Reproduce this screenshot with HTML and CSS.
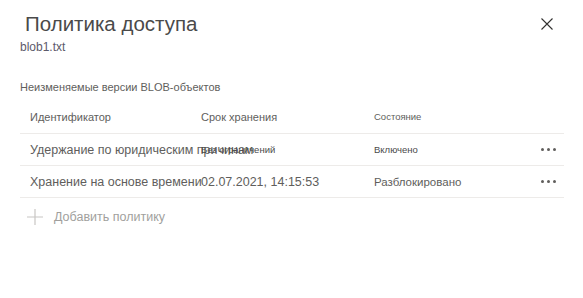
FILE: index.html
```html
<!DOCTYPE html>
<html lang="ru">
<head>
<meta charset="utf-8">
<link rel="stylesheet" href="styles.css">
</head>
<body>
<div class="panel">
  <div class="header">
    <div class="titles">
      <h1 class="title">Политика доступа</h1>
      <div class="subtitle">blob1.txt</div>
    </div>
    <button class="close" aria-label="Закрыть">
      <svg width="12" height="12" viewBox="0 0 12 12"><path d="M0.5 0.5 L11.5 11.5 M11.5 0.5 L0.5 11.5" stroke="#323130" stroke-width="1.1" fill="none"/></svg>
    </button>
  </div>
  <div class="section">Неизменяемые версии BLOB-объектов</div>
  <div class="table">
    <div class="row head">
      <div class="cell">Идентификатор</div>
      <div class="cell">Срок хранения</div>
      <div class="cell small">Состояние</div>
      <div class="cell"></div>
    </div>
    <div class="row">
      <div class="cell main">Удержание по юридическим причинам</div>
      <div class="cell small">Без ограничений</div>
      <div class="cell small">Включено</div>
      <div class="cell more"><span class="dots"><i></i><i></i><i></i></span></div>
    </div>
    <div class="row">
      <div class="cell main">Хранение на основе времени</div>
      <div class="cell main">02.07.2021, 14:15:53</div>
      <div class="cell mid">Разблокировано</div>
      <div class="cell more"><span class="dots"><i></i><i></i><i></i></span></div>
    </div>
  </div>
  <div class="add">
    <svg width="16" height="16" viewBox="0 0 16 16"><path d="M8 0 V16 M0 8 H16" stroke="#c8c6c4" stroke-width="1.2" fill="none"/></svg>
    <span>Добавить политику</span>
  </div>
</div>
</body>
</html>
```

FILE: styles.css
```css
html, body {
  margin: 0;
  padding: 0;
  background: #fff;
}
body {
  font-family: "Liberation Sans", Arial, sans-serif;
  color: #605e5c;
}
.panel {
  padding: 12px 19px 0 20px;
}
.header {
  display: flex;
  justify-content: space-between;
  align-items: flex-start;
}
.title {
  margin: 0;
  padding-left: 5px;
  font-size: 20.5px;
  font-weight: normal;
  line-height: 24px;
  color: #4a4a4a;
}
.subtitle {
  font-size: 12px;
  line-height: 14px;
  margin-top: 4px;
  color: #5c5a6a;
}
.close {
  border: 0;
  background: none;
  padding: 0;
  margin: 6px 11px 0 0;
  width: 12px;
  height: 12px;
  display: flex;
}
.section {
  margin-top: 26px;
  font-size: 11px;
  line-height: 14px;
  color: #605e5c;
}
.table {
  margin-top: 6px;
  width: 544px;
}
.row {
  display: grid;
  grid-template-columns: 171px 173px 160px 40px;
  height: 31px;
  border-bottom: 1px solid #edebe9;
  align-items: center;
}
.row.head {
  height: 33px;
}
.cell {
  padding-left: 10px;
  white-space: nowrap;
  font-size: 11px;
  color: #605e5c;
}
.cell.main {
  font-size: 12.5px;
}
.cell.mid {
  font-size: 11.5px;
}
.cell.small {
  font-size: 9.5px;
  color: #4a4a4a;
}
.head .cell.small {
  color: #605e5c;
}
.cell.more {
  padding: 0;
  display: flex;
  justify-content: flex-start;
}
.dots {
  display: flex;
  gap: 3px;
  margin-left: 17px;
}
.dots i {
  display: block;
  width: 3px;
  height: 3px;
  border-radius: 50%;
  background: #605e5c;
}
.add {
  display: flex;
  align-items: center;
  gap: 11px;
  margin-top: 11px;
  padding-left: 7px;
  font-size: 12.5px;
  color: #a19f9d;
}
```
